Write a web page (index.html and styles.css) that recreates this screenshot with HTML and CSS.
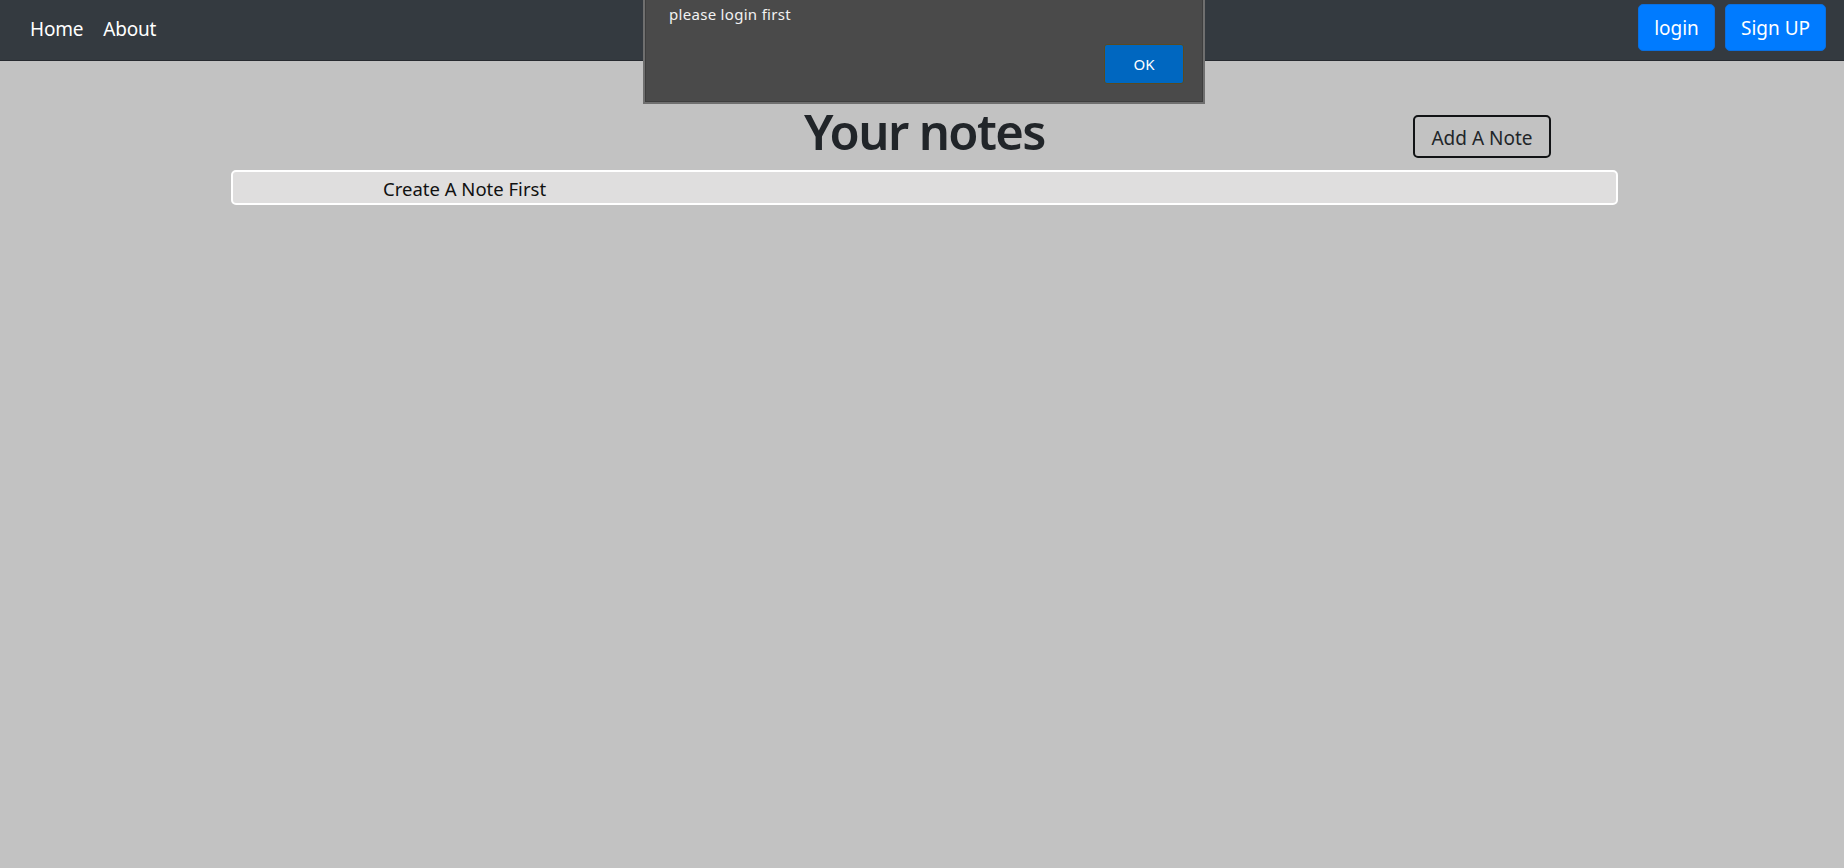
FILE: index.html
```html
<!DOCTYPE html>
<html lang="en">
<head>
<meta charset="utf-8">
<title>Your notes</title>
<link rel="stylesheet" href="styles.css">
</head>
<body>
<nav class="navbar">
  <div class="nav-links">
    <a class="nav-link" href="#">Home</a>
    <a class="nav-link" href="#">About</a>
  </div>
  <div class="nav-actions">
    <button class="btn-primary btn-login">login</button>
    <button class="btn-primary btn-signup">Sign UP</button>
  </div>
</nav>

<main class="main">
  <div class="heading-row">
    <span class="spacer"></span>
    <h1 class="title">Your notes</h1>
    <button class="btn-outline">Add A Note</button>
  </div>
  <div class="note-box">Create A Note First</div>
</main>

<div class="dialog" role="alertdialog">
  <p class="dialog-text">please login first</p>
  <div class="dialog-actions">
    <button class="dialog-ok">OK</button>
  </div>
</div>
</body>
</html>
```

FILE: styles.css
```css
html, body {
  margin: 0;
  padding: 0;
}
body {
  background: #c2c2c2;
  font-family: "Noto Sans", "Open Sans", sans-serif;
  color: #212529;
  min-height: 868px;
}

.navbar {
  height: 60px;
  background: #343a40;
  border-bottom: 1px solid #262a2f;
  display: flex;
  justify-content: space-between;
  align-items: flex-start;
  padding: 0 18px 0 20px;
}
.nav-links {
  display: flex;
  height: 60px;
  align-items: center;
}
.nav-link {
  color: #ffffff;
  text-decoration: none;
  font-size: 19px;
  letter-spacing: -0.2px;
  padding: 0 10px;
  line-height: 28px;
  margin-top: -2px;
}
.nav-actions {
  display: flex;
  gap: 10px;
  padding-top: 4px;
}
.btn-primary {
  background: #007bff;
  color: #ffffff;
  border: 1px solid #0a6fe0;
  border-radius: 5px;
  height: 47px;
  font-family: inherit;
  font-size: 19px;
  padding: 2px 0 0;
  line-height: 1;
}
.btn-login {
  width: 77px;
}
.btn-signup {
  width: 101px;
}

.main {
  padding: 39px 226px 0 231px;
}
.heading-row {
  display: grid;
  grid-template-columns: 1fr auto 1fr;
  align-items: end;
}
.title {
  margin: 0;
  padding-top: 1px;
  font-size: 49px;
  font-weight: 600;
  letter-spacing: -1.6px;
  line-height: 60px;
  color: #212529;
}
.btn-outline {
  justify-self: end;
  margin-right: 67px;
  margin-bottom: 3px;
  width: 138px;
  height: 43px;
  background: transparent;
  border: 2px solid #111315;
  border-radius: 5px;
  font-family: inherit;
  font-size: 19px;
  color: #212529;
  padding: 3px 0 0;
}
.note-box {
  margin-top: 9px;
  height: 28px;
  border: 2px solid #ffffff;
  border-radius: 5px;
  background: #dfdede;
  font-size: 18.5px;
  line-height: 28px;
  padding: 3px 0 0 150px;
  box-sizing: content-box;
  color: #111;
}

.dialog {
  position: absolute;
  top: 0;
  left: 643px;
  width: 558px;
  height: 102px;
  background: #4a4a4a;
  border: 2px solid #6f6f6f;
  border-top: none;
  box-shadow: inset 1px 0 0 #3e3e3e, inset -1px 0 0 #3e3e3e, inset 0 -1px 0 #3e3e3e;
  display: flex;
  flex-direction: column;
}
.dialog-text {
  margin: 0;
  padding: 4px 0 0 24px;
  font-size: 15px;
  line-height: 20px;
  color: #f2f2f2;
  letter-spacing: 0.3px;
}
.dialog-actions {
  display: flex;
  justify-content: flex-end;
  padding: 20px 19px 0 0;
}
.dialog-ok {
  width: 80px;
  height: 40px;
  background: #0067c0;
  border: 1px solid #5a4a20;
  border-radius: 3px;
  color: #ffffff;
  font-family: inherit;
  font-size: 15px;
  padding: 0;
}
```
